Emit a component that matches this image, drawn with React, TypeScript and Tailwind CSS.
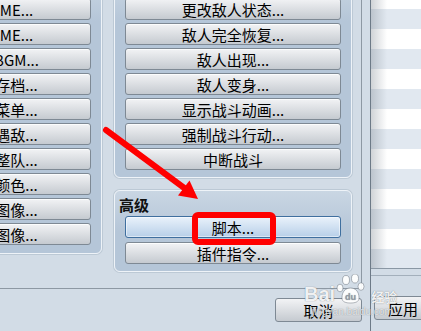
import React from "react";

const leftItems = [
  "更改胜利ME...",
  "更改战败ME...",
  "更改载具BGM...",
  "更改允许存档...",
  "更改允许菜单...",
  "更改允许遇敌...",
  "更改允许整队...",
  "更改窗口颜色...",
  "更改角色图像...",
  "更改载具图像...",
];

const midItems = [
  "更改敌人状态...",
  "敌人完全恢复...",
  "敌人出现...",
  "敌人变身...",
  "显示战斗动画...",
  "强制战斗行动...",
  "中断战斗",
];

function Btn({
  children,
  hl = false,
  left = false,
}: {
  children: React.ReactNode;
  hl?: boolean;
  left?: boolean;
}) {
  return (
    <div
      className={
        "h-[22px] w-[216px] shrink-0 rounded-[3px] border flex items-center justify-center text-[15px] leading-none text-black whitespace-nowrap " +
        (hl
          ? "border-[#3f6f9f] bg-[linear-gradient(to_bottom,#e9f2fb,#b7cfe8)] shadow-[inset_0_0_0_1px_rgba(255,255,255,0.5)]"
          : "border-[#7e8994] bg-[linear-gradient(to_bottom,#f2f3f5,#c5cad0)] shadow-[inset_0_1px_0_rgba(255,255,255,0.8)]") +
        (left ? " pl-[7px]" : "")
      }
    >
      {children}
    </div>
  );
}

const panel =
  "w-[238px] shrink-0 border border-[#eef3f8] bg-[linear-gradient(to_bottom,#c9d6e3,#b5c6d8_40px,#b5c6d8)] shadow-[0_0_0_1px_rgba(150,165,180,0.35)]";

export default function App() {
  const rows = Array.from({ length: 14 });
  return (
    <div className="relative w-[421px] h-[331px] overflow-hidden bg-[#d2dce6] font-['Noto_Sans_CJK_SC','Noto_Sans',sans-serif]">
      <div className="flex h-full">
        {/* left area */}
        <div className="w-[370px] shrink-0 flex flex-col">
          <div className="h-[289px] w-[362px] shrink-0 border-r border-b border-[#8d98a3] flex overflow-hidden">
            <div className="flex gap-[12px] ml-[-136px] items-start">
              <div
                className={
                  panel +
                  " mt-[-20px] pt-[17px] pb-[8px] px-[10px] rounded-b-[6px] flex flex-col gap-[3px]"
                }
              >
                {leftItems.map((t) => (
                  <Btn key={t} left>
                    {t}
                  </Btn>
                ))}
              </div>
              <div className="flex flex-col gap-[12px]">
                <div
                  className={
                    panel +
                    " mt-[-20px] pt-[17px] pb-[7px] px-[10px] rounded-b-[6px] flex flex-col gap-[3px]"
                  }
                >
                  {midItems.map((t) => (
                    <Btn key={t}>{t}</Btn>
                  ))}
                </div>
                <div className={panel + " rounded-[6px] pb-[7px] flex flex-col"}>
                  <div className="h-[25px] pl-[4px] pt-[6px] text-[15px] leading-[15px] font-bold text-[#111]">
                    高级
                  </div>
                  <div className="px-[10px] flex flex-col gap-[4px]">
                    <Btn hl>脚本...</Btn>
                    <Btn>插件指令...</Btn>
                  </div>
                </div>
              </div>
            </div>
          </div>
          <div className="flex justify-end pr-[8px] pt-[9px]">
            <div className="h-[24px] w-[87px] rounded-[3px] border border-[#7e8994] bg-[linear-gradient(to_bottom,#f2f3f5,#c5cad0)] flex items-center justify-center text-[15px] leading-none text-black">
              取消
            </div>
          </div>
        </div>
        {/* right area */}
        <div className="flex-1 border-l border-[#6d7a87] flex flex-col">
          <div className="relative h-[269px] shrink-0 overflow-hidden border-b border-[#8a97a4] bg-white">
            <div className="mt-[-11px] flex flex-col">
              {rows.map((_, i) => (
                <div
                  key={i}
                  className={i % 2 === 0 ? "h-[20px] bg-white" : "h-[20px] bg-[#e1e8f0]"}
                />
              ))}
            </div>
            <div className="absolute inset-y-0 left-0 w-[16px] bg-[linear-gradient(to_right,rgba(120,130,140,0.35),rgba(120,130,140,0))]" />
          </div>
          <div className="h-[7px] shrink-0 border-b border-[#a3afbb]" />
          <div className="pt-[20px] pl-[3px]">
            <div className="h-[24px] w-[87px] rounded-[3px] border border-[#7e8994] bg-[linear-gradient(to_bottom,#f2f3f5,#c5cad0)] flex items-center pl-[13px] text-[15px] leading-none text-black">
              应用
            </div>
          </div>
        </div>
      </div>

      {/* Baidu watermark */}
      <div className="absolute left-[304px] top-[274px] text-white/90 [text-shadow:0_0_1px_rgba(70,80,90,0.8)] pointer-events-none">
        <div className="flex items-end">
          <span className="text-[20px] leading-none font-bold font-['Liberation_Sans',sans-serif]">Bai</span>
          <svg width="34" height="30" viewBox="0 0 34 30" className="mx-[1px]">
            <g fill="rgba(255,255,255,0.92)" stroke="rgba(80,90,100,0.6)" strokeWidth="0.7">
              <ellipse cx="10" cy="6" rx="3.5" ry="4.5" />
              <ellipse cx="19" cy="4.5" rx="3.5" ry="4.5" />
              <ellipse cx="4" cy="14" rx="3" ry="3.8" />
              <ellipse cx="25" cy="12.5" rx="3" ry="3.8" />
              <path d="M6 24 C6 17 10 14 14.5 14 C19 14 23 17 23 24 C23 28 19 29 14.5 29 C10 29 6 28 6 24 Z" />
            </g>
            <text x="14.5" y="26" textAnchor="middle" fontSize="9" fontWeight="700" fill="rgba(140,150,160,0.8)" fontFamily="Liberation Sans, sans-serif">du</text>
          </svg>
          <span className="text-[13px] leading-none font-bold mb-[1px]">经验</span>
        </div>
        <div className="ml-[8px] mt-[3px] text-[10px] leading-none font-['Liberation_Sans',sans-serif] text-white/80">
          jingyan.baidu.com
        </div>
      </div>

      {/* red annotations */}
      <svg className="absolute inset-0 pointer-events-none" width="421" height="331" viewBox="0 0 421 331">
        <line x1="106" y1="130" x2="187" y2="190" stroke="#ff0000" strokeWidth="6" strokeLinecap="round" />
        <polygon points="198,199 178,195.5 189.5,180.5" fill="#ff0000" />
        <rect x="195" y="215" width="78" height="27" rx="3" fill="none" stroke="#ff0000" strokeWidth="6" />
      </svg>
    </div>
  );
}
